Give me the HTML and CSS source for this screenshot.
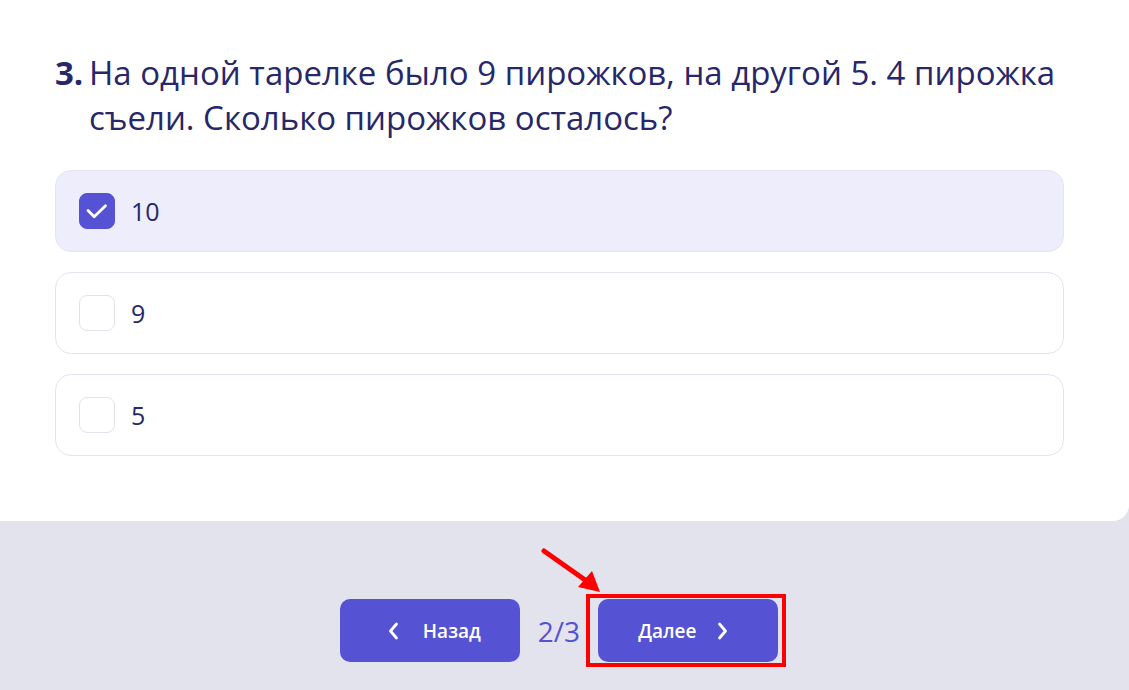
FILE: index.html
```html
<!DOCTYPE html>
<html lang="ru">
<head>
<meta charset="utf-8">
<link rel="stylesheet" href="styles.css">
</head>
<body>
<div class="page">
  <section class="card">
    <div class="question">
      <span class="qnum">3.</span>
      <span class="qtext">На одной тарелке было 9 пирожков, на другой 5. 4 пирожка съели. Сколько пирожков осталось?</span>
    </div>
    <div class="options">
      <label class="option selected">
        <span class="box checked">
          <svg width="36" height="36" viewBox="0 0 36 36"><path d="M8.5 17.5l6.5 6.5L27 12.5" fill="none" stroke="#fff" stroke-width="3" stroke-linecap="round" stroke-linejoin="round"/></svg>
        </span>
        <span class="otext">10</span>
      </label>
      <label class="option">
        <span class="box"></span>
        <span class="otext">9</span>
      </label>
      <label class="option">
        <span class="box"></span>
        <span class="otext">5</span>
      </label>
    </div>
  </section>
  <footer class="nav">
    <button class="btn prev">
      <svg width="11" height="18" viewBox="0 0 11 18"><path d="M8.5 2L2.5 9l6 7" fill="none" stroke="#fff" stroke-width="2.8" stroke-linecap="round" stroke-linejoin="round"/></svg>
      <span>Назад</span>
    </button>
    <span class="counter">2/3</span>
    <div class="highlight-wrap">
      <button class="btn next">
        <span>Далее</span>
        <svg width="11" height="18" viewBox="0 0 11 18"><path d="M2.5 2L8.5 9l-6 7" fill="none" stroke="#fff" stroke-width="2.8" stroke-linecap="round" stroke-linejoin="round"/></svg>
      </button>
      <span class="red-frame"></span>
      <svg class="red-arrow" width="70" height="54" viewBox="0 0 70 54">
        <line x1="4" y1="4" x2="48" y2="35" stroke="#f00" stroke-width="5" stroke-linecap="round"/>
        <polygon points="60,45 38,40 52,24" fill="#f00"/>
      </svg>
    </div>
  </footer>
</div>
</body>
</html>
```
FILE: styles.css
```css
* { box-sizing: border-box; }
html, body { margin: 0; padding: 0; }
body {
  background: #e3e3ee;
  font-family: "Open Sans", "Noto Sans", sans-serif;
  color: #27276a;
}
.page { width: 1129px; height: 690px; overflow: hidden; }
.card {
  background: #fff;
  height: 521px;
  border-radius: 0 0 16px 0;
  padding: 50px 65px 0 55px;
}
.question {
  display: flex;
  font-size: 33px;
  line-height: 45px;
  color: #27276a;
}
.qnum { font-weight: 700; width: 34px; flex: none; }
.qtext { flex: 1; }
.options {
  margin-top: 30px;
  display: flex;
  flex-direction: column;
  gap: 20px;
}
.option {
  height: 82px;
  border: 1px solid #e4e4f1;
  border-radius: 16px;
  display: flex;
  align-items: center;
  padding-left: 23px;
  gap: 16px;
  background: #fff;
}
.option.selected { background: #ededfc; border-color: #e4e4f4; }
.box {
  width: 36px;
  height: 36px;
  border: 1px solid #e2e2ef;
  border-radius: 8px;
  background: #fff;
  display: flex;
  align-items: center;
  justify-content: center;
  flex: none;
}
.box.checked { background: #5552d4; border-color: #5552d4; }
.otext { font-size: 25px; color: #27276a; }
.nav {
  display: flex;
  justify-content: center;
  align-items: center;
  gap: 18px;
  padding-top: 78px;
  padding-right: 11px;
}
.btn {
  width: 180px;
  height: 63px;
  border: none;
  border-radius: 10px;
  background: #5552d4;
  color: #fff;
  font-family: "Open Sans", "Noto Sans", sans-serif;
  font-weight: 600;
  font-size: 19px;
  display: flex;
  align-items: center;
  justify-content: flex-start;
  flex: none;
}
.btn.prev { padding: 0 0 0 48px; gap: 24px; }
.btn.next { padding: 0 0 0 40px; gap: 21px; }
.counter { font-size: 28px; color: #5552d4; }
.highlight-wrap { position: relative; }
.red-frame {
  position: absolute;
  left: -12px; top: -5px;
  width: 200px; height: 73px;
  border: 4px solid #f00;
}
.red-arrow {
  position: absolute;
  left: -58px; top: -52px;
}
```
